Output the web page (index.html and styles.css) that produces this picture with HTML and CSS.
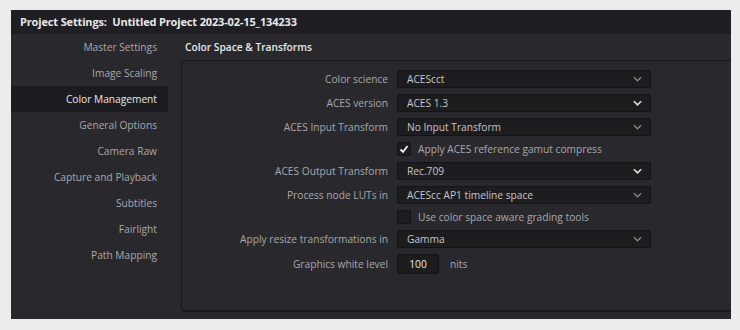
FILE: index.html
```html
<!DOCTYPE html>
<html>
<head>
    <title>Project Settings</title>
    <link rel="stylesheet" href="styles.css">
</head>
<body>
    <div class="window">
        <div class="title-bar">Project Settings:&nbsp; Untitled Project 2023-02-15_134233</div>

        <div class="window-body">
            <!-- left navigation -->
            <ul class="sidebar">
                <li>Master Settings</li>
                <li>Image Scaling</li>
                <li class="active">Color Management</li>
                <li>General Options</li>
                <li>Camera Raw</li>
                <li>Capture and Playback</li>
                <li>Subtitles</li>
                <li>Fairlight</li>
                <li>Path Mapping</li>
            </ul>

            <div class="content">
                <div class="section-title">Color Space &amp; Transforms</div>

                <div class="panel">
                    <div class="form-grid">
                        <label>Color science</label>
                        <div class="dropdown"><span>ACEScct</span><svg class="chevron" viewBox="0 0 10 6"><path d="M1 1l4 4 4-4"/></svg></div>

                        <label>ACES version</label>
                        <div class="dropdown"><span>ACES 1.3</span><svg class="chevron bright" viewBox="0 0 10 6"><path d="M1 1l4 4 4-4"/></svg></div>

                        <label>ACES Input Transform</label>
                        <div class="dropdown"><span>No Input Transform</span><svg class="chevron" viewBox="0 0 10 6"><path d="M1 1l4 4 4-4"/></svg></div>

                        <span></span>
                        <div class="check-row">
                            <span class="checkbox"><svg viewBox="0 0 12 12"><path d="M2.5 6.5l2.5 2.5 4.5-6"/></svg></span>
                            <span>Apply ACES reference gamut compress</span>
                        </div>

                        <label>ACES Output Transform</label>
                        <div class="dropdown"><span>Rec.709</span><svg class="chevron bright" viewBox="0 0 10 6"><path d="M1 1l4 4 4-4"/></svg></div>

                        <label>Process node LUTs in</label>
                        <div class="dropdown"><span>ACEScc AP1 timeline space</span><svg class="chevron" viewBox="0 0 10 6"><path d="M1 1l4 4 4-4"/></svg></div>

                        <span></span>
                        <div class="check-row">
                            <span class="checkbox"></span>
                            <span>Use color space aware grading tools</span>
                        </div>

                        <label>Apply resize transformations in</label>
                        <div class="dropdown"><span>Gamma</span><svg class="chevron" viewBox="0 0 10 6"><path d="M1 1l4 4 4-4"/></svg></div>

                        <label>Graphics white level</label>
                        <div class="number-row">
                            <span class="number-box">100</span>
                            <span class="unit">nits</span>
                        </div>
                    </div>
                </div>
            </div>
        </div>
    </div>
</body>
</html>
```

FILE: styles.css
```css
:root {
    --page-bg: #ececec;
    --window-bg: #28282d;
    --title-bg: #1f1f23;
    --field-bg: #1d1d20;
    --field-border: #141417;
    --line-color: #19191c;
    --label-color: #a9a9a9;
    --text-color: #c6c6c6;
    --bright-text: #e8e8e8;
}

body {
    margin: 0;
    padding: 10px 0 0 11px;
    background-color: var(--page-bg);
    font-family: "Open Sans", "DejaVu Sans", sans-serif;
    font-size: 10.2px;
}

/* --- WINDOW --- */
.window {
    width: 720px;
    height: 309px;
    background-color: var(--window-bg);
    display: flex;
    flex-direction: column;
}

.title-bar {
    height: 23px;
    line-height: 23px;
    padding-left: 9px;
    background-color: var(--title-bg);
    color: var(--bright-text);
    font-weight: 700;
    font-size: 11px;
    letter-spacing: -0.15px;
}

.window-body {
    flex: 1;
    display: flex;
    border-top: 1px solid #1c1c20;
}

/* --- SIDEBAR --- */
.sidebar {
    list-style: none;
    margin: 0;
    padding: 0;
    width: 170px;
}

.sidebar li {
    height: 26px;
    line-height: 26px;
    margin-right: 13px;
    padding-right: 11px;
    text-align: right;
    color: var(--label-color);
}

.sidebar li.active {
    background-color: #1c1c20;
    color: var(--bright-text);
}

/* --- CONTENT --- */
.content {
    flex: 1;
    display: flex;
    flex-direction: column;
    padding-bottom: 7px;
}

.section-title {
    height: 26px;
    line-height: 26px;
    padding-left: 4px;
    color: var(--bright-text);
    font-weight: 600;
}

.panel {
    flex: 1;
    border: 1px solid var(--line-color);
    border-bottom-width: 2px;
    border-right: none;
    border-radius: 4px 0 0 4px;
    padding-top: 9px;
}

.form-grid {
    display: grid;
    grid-template-columns: 206px 254px;
    column-gap: 9px;
    row-gap: 6px;
    align-items: center;
}

.form-grid label {
    text-align: right;
    color: var(--label-color);
}

.dropdown {
    height: 18px;
    box-sizing: border-box;
    background-color: var(--field-bg);
    border: 1px solid var(--field-border);
    border-radius: 2px;
    display: flex;
    align-items: center;
    justify-content: space-between;
    padding: 0 8px 0 9px;
    color: var(--text-color);
}

.chevron {
    width: 9px;
    height: 6px;
    fill: none;
    stroke: #8a8a8a;
    stroke-width: 1.4;
}
.chevron.bright { stroke: #e0e0e0; stroke-width: 1.8; }

.check-row {
    height: 14px;
    display: flex;
    align-items: center;
    gap: 7px;
    color: var(--label-color);
}

.checkbox {
    width: 12px;
    height: 12px;
    background-color: var(--field-bg);
    border: 1px solid var(--field-border);
    border-radius: 2px;
    display: flex;
}
.checkbox svg {
    width: 12px;
    height: 12px;
    fill: none;
    stroke: #f2f2f2;
    stroke-width: 1.8;
}

.number-row {
    display: flex;
    align-items: center;
    gap: 11px;
}

.number-box {
    width: 42px;
    height: 20px;
    box-sizing: border-box;
    line-height: 18px;
    text-align: center;
    background-color: var(--field-bg);
    border: 1px solid var(--field-border);
    border-radius: 2px;
    color: var(--bright-text);
}

.unit { color: var(--label-color); }
```
